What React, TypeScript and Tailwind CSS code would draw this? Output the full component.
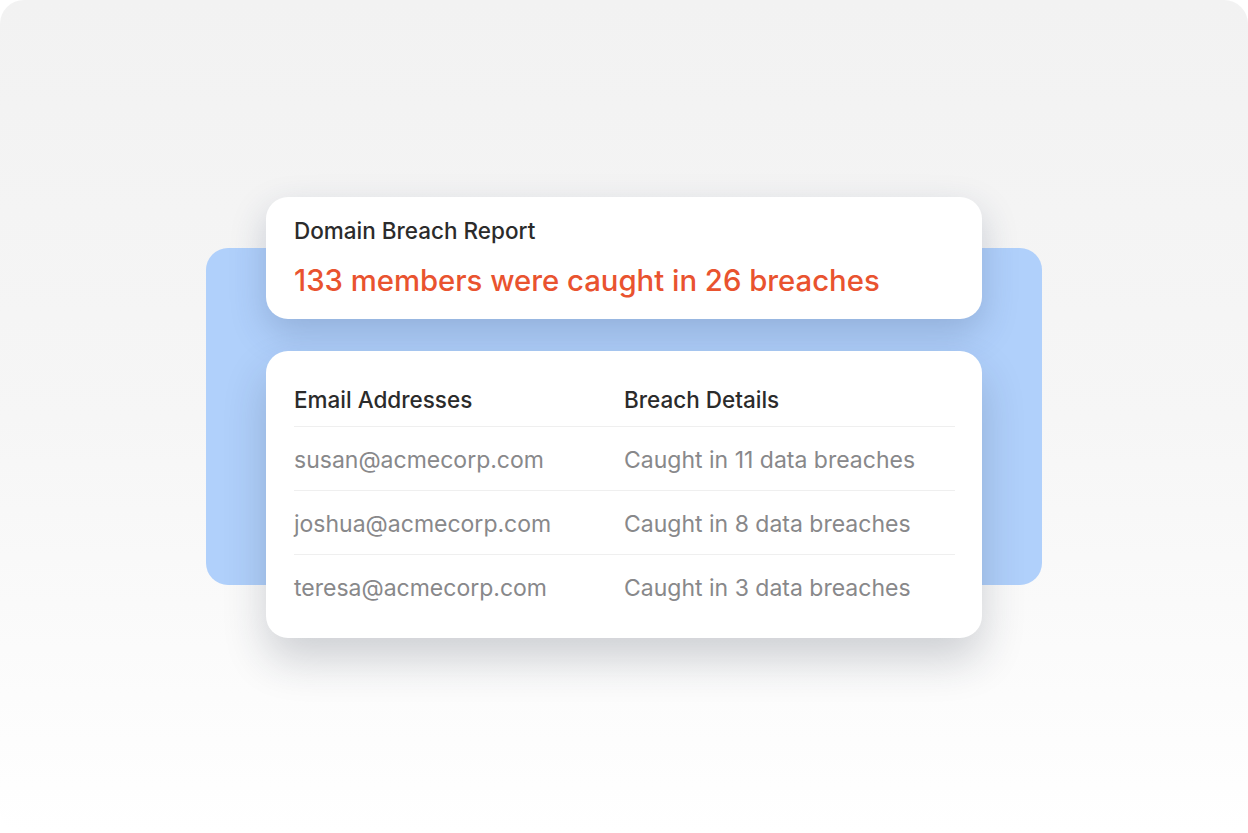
import React from 'react';

interface BreachRow {
  email: string;
  details: string;
}

const rows: BreachRow[] = [
  { email: 'susan@acmecorp.com', details: 'Caught in 11 data breaches' },
  { email: 'joshua@acmecorp.com', details: 'Caught in 8 data breaches' },
  { email: 'teresa@acmecorp.com', details: 'Caught in 3 data breaches' }
];

export default function App() {
  return (
    <div className="w-[1248px] h-[833px] bg-white font-['Inter',sans-serif]">
      <div className="w-full h-full rounded-[24px] bg-gradient-to-b from-[#f2f2f2] via-[#f6f6f6] to-white flex items-start justify-center pt-[197px]">
        <div className="relative w-[836px] flex justify-center">
          {/* blue backdrop */}
          <div className="absolute left-0 right-0 top-[51px] h-[337px] rounded-[22px] bg-[#b0d0fb]" />

          <div className="relative w-[716px] flex flex-col gap-[32px]">
            {/* Summary card */}
            <div className="bg-white rounded-[22px] h-[122px] px-[28px] pt-[19px] shadow-[0_14px_36px_rgba(40,60,100,0.22)]">
              <h2 className="text-[22.5px] leading-[30px] font-medium text-[#2b2b2b]">
                Domain Breach Report
              </h2>
              <p className="mt-[16px] text-[29.3px] leading-[38px] font-medium text-[#e9532f]">
                133 members were caught in 26 breaches
              </p>
            </div>

            {/* Table card */}
            <div className="bg-white rounded-[22px] h-[287px] pl-[28px] pr-[27px] pt-[22px] shadow-[0_22px_44px_rgba(30,40,60,0.2)]">
              <div className="grid grid-cols-[330px_1fr] h-[54px] items-center border-b border-[#efefef]">
                <span className="text-[22.5px] font-medium text-[#2b2b2b]">Email Addresses</span>
                <span className="text-[22.5px] font-medium text-[#2b2b2b]">Breach Details</span>
              </div>
              {rows.map((row, i) => (
                <div
                  key={row.email}
                  className={`grid grid-cols-[330px_1fr] h-[64px] items-center pt-[3px] ${
                    i < rows.length - 1 ? 'border-b border-[#efefef]' : ''
                  }`}
                >
                  <span className="text-[23px] text-[#88888a]">{row.email}</span>
                  <span className="text-[23px] text-[#88888a]">{row.details}</span>
                </div>
              ))}
            </div>
          </div>
        </div>
      </div>
    </div>
  );
}
